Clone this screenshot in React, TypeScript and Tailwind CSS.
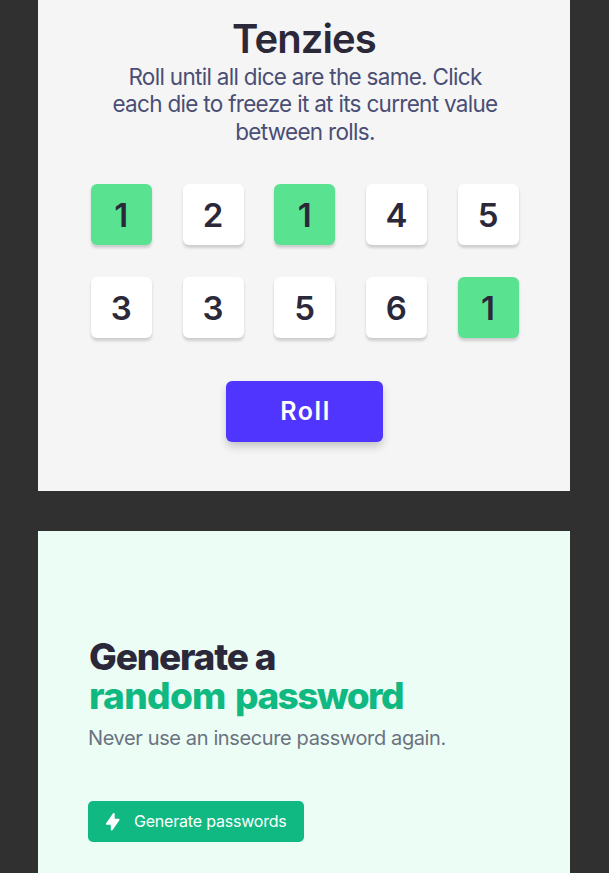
const dice = [
  { value: 1, held: true },
  { value: 2, held: false },
  { value: 1, held: true },
  { value: 4, held: false },
  { value: 5, held: false },
  { value: 3, held: false },
  { value: 3, held: false },
  { value: 5, held: false },
  { value: 6, held: false },
  { value: 1, held: true },
];

function Die({ value, held }: { value: number; held: boolean }) {
  return (
    <button
      className={`flex h-[61px] w-[61px] items-center justify-center rounded-[6px] pt-[3px] text-[33px] leading-none font-semibold text-[#2b283a] shadow-[0_2.5px_3px_rgba(0,0,0,0.16)] ${
        held ? "bg-[#59e391]" : "bg-white"
      }`}
    >
      {value}
    </button>
  );
}

function Tenzies() {
  return (
    <main className="flex h-[491px] flex-col items-center bg-[#f5f5f5]">
      <h1 className="mt-[14px] text-[40px] leading-[49px] font-semibold tracking-[-0.9px] text-[#2b283a]">Tenzies</h1>
      <p className="pl-[2px] text-center text-[22.5px] leading-[27.3px] font-normal tracking-[-0.7px] whitespace-nowrap text-[#4a4e74]">
        Roll until all dice are the same. Click
        <br />
        each die to freeze it at its current value
        <br />
        between rolls.
      </p>
      <div className="mt-[39px] ml-[1.4px] grid grid-cols-[repeat(5,61px)] gap-x-[30.7px] gap-y-[32px]">
        {dice.map((die, i) => (
          <Die key={i} value={die.value} held={die.held} />
        ))}
      </div>
      <button className="mt-[43.4px] ml-px h-[61px] w-[157px] rounded-[6px] bg-[#5035ff] pl-[2px] text-[25px] font-semibold tracking-[1.6px] text-white shadow-[0_5px_10px_-1px_rgba(0,0,0,0.22)]">
        Roll
      </button>
    </main>
  );
}

function PasswordGenerator() {
  return (
    <section className="mt-10 h-[342px] bg-[#ecfdf5] pt-[106px] pl-[50px]">
      <h2 className="pl-px text-[37px] leading-[39px] font-extrabold text-[#2b283a]">
        <span className="block tracking-[-1.2px]">Generate a</span>
        <span className="block tracking-[-0.7px] text-[#10b981] [word-spacing:2px]">
          random <span className="tracking-[-1.6px]">password</span>
        </span>
      </h2>
      <p className="mt-[11px] text-[20px] leading-[24px] tracking-[-0.38px] text-[#6b7280]">Never use an insecure password again.</p>
      <button className="mt-[51px] flex h-[40.5px] w-[216px] items-center rounded-[5px] bg-[#10b981] pl-[15px] text-[16px] text-white">
        <svg className="h-[19.5px] w-[19.5px]" viewBox="0 0 20 20" fill="currentColor">
          <path d="M11.3 1.046A1 1 0 0112 2v5h4a1 1 0 01.82 1.573l-7 10A1 1 0 018 18v-5H4a1 1 0 01-.82-1.573l7-10a1 1 0 011.12-.38z" />
        </svg>
        <span className="ml-[11.5px] pb-[1px] tracking-[-0.2px] whitespace-nowrap">Generate passwords</span>
      </button>
    </section>
  );
}

export default function App() {
  return (
    <div className="h-[873px] w-[609px] overflow-hidden bg-[#303030] pr-[39px] pl-[38px] font-['Inter','Liberation_Sans',sans-serif]">
      <Tenzies />
      <PasswordGenerator />
    </div>
  );
}
